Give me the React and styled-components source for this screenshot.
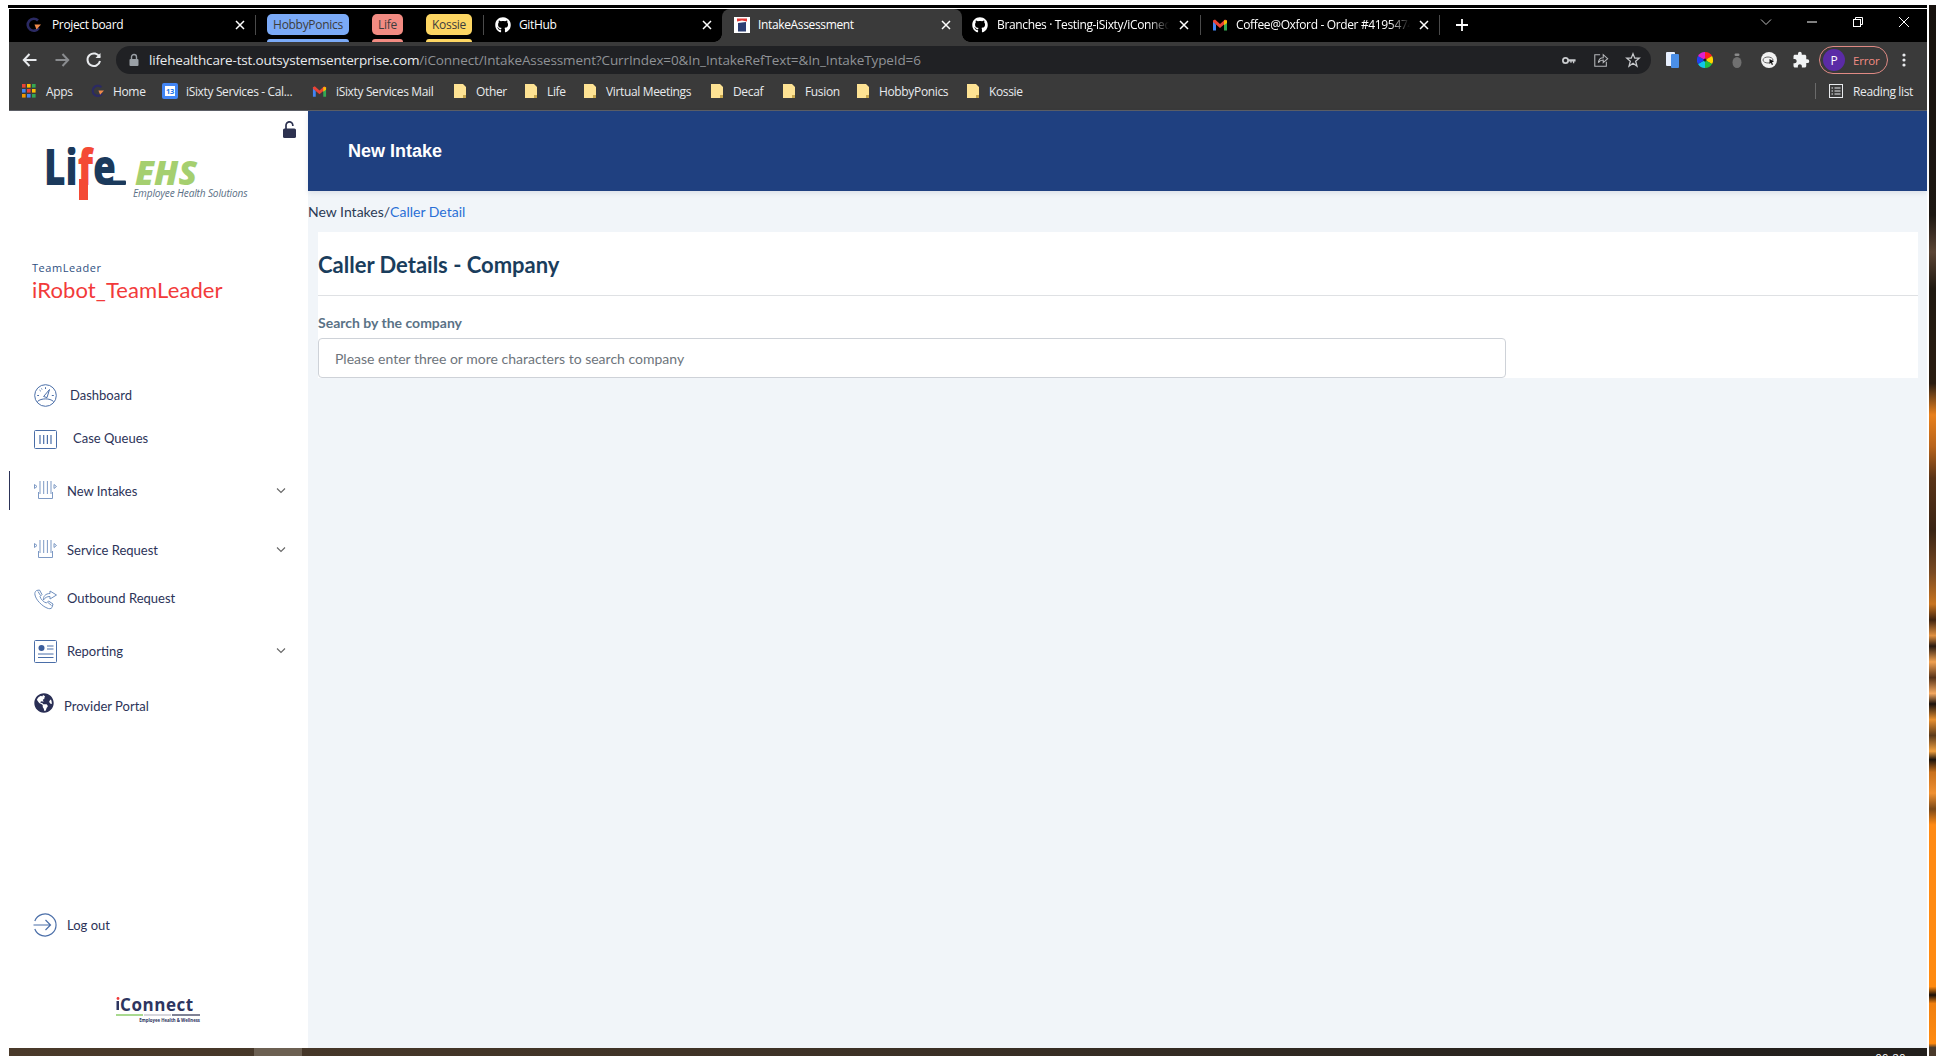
import React from "react";
import styled, { createGlobalStyle } from "styled-components";
import { FaGithub, FaGlobeAmericas } from "react-icons/fa";
import { MdExtension } from "react-icons/md";

const Global = createGlobalStyle`
  html, body { margin: 0; padding: 0; background: #fff; }
  * { box-sizing: border-box; }
  #root { width: 1936px; height: 1056px; overflow: hidden; }
`;

const CHROME_FONT = `"Open Sans", "Noto Sans", sans-serif`;
const APP_FONT = `Lato, "Open Sans", sans-serif`;

const Screen = styled.div`
  display: flex;
  width: 1936px;
  height: 1056px;
  padding-left: 9px;
  gap: 2px;
  background: #fff;
`;
const Wallpaper = styled.div`
  width: 7px;
  margin-top: 5px;
  background: linear-gradient(180deg,
    #17120e 0%, #1d1712 20%, #5a4434 23.5%, #1f1810 27%, #2a1c10 36%, #6b4018 37%, #e8801c 39%, #b8641c 42%, #5a3418 45%,
    #3a2414 50%, #7a4a22 54%, #c87420 57%, #40240f 58.5%, #e09040 60%, #2a1a10 61%, #f0a050 62.5%, #57331a 64%,
    #f4a860 65.5%, #1c120c 66.5%, #e89030 68%, #5c3a1a 69.5%, #f0a040 71%, #1d130a 71.8%, #c8701c 73%, #f09030 75%, #7a4818 76.5%,
    #ff8a14 78%, #ff8a10 93.4%, #1a0f08 94.2%, #f08010 95%, #ff8a10 98.8%, #4a3a2a 99.2%, #4a3a2a 100%);
`;
const Window = styled.div`
  width: 1918px;
  height: 1056px;
  display: flex;
  flex-direction: column;
`;
const TopRule = styled.div`
  height: 9px;
  flex: none;
  margin-left: -1px;
  border-top: 5px solid #fff;
  border-bottom: 1px solid #fff;
  background: #000;
`;

/* ---------- tab strip ---------- */
const TabStrip = styled.div`
  height: 33px;
  flex: none;
  display: flex;
  align-items: stretch;
  background: #000;
  color: #fff;
  font: 400 12px ${CHROME_FONT};
  letter-spacing: -0.35px;
`;
const Tab = styled.div`
  position: relative;
  width: ${(p) => p.$w}px;
  flex: none;
  display: flex;
  align-items: center;
  gap: ${(p) => p.$gap ?? 8}px;
  padding: 0 ${(p) => p.$pr ?? 10}px 2px ${(p) => p.$pl}px;
  border-radius: 8px 8px 0 0;
  background: ${(p) => (p.$active ? "#3a3a3a" : "transparent")};
  ${(p) =>
    p.$active &&
    `
    &::before, &::after {
      content: ""; position: absolute; bottom: 0; width: 8px; height: 8px;
    }
    &::before { left: -8px; background: radial-gradient(circle at 0 0, #000 7.5px, #3a3a3a 8px); }
    &::after { right: -8px; background: radial-gradient(circle at 100% 0, #000 7.5px, #3a3a3a 8px); }
  `}
`;
const TabTitle = styled.span`
  flex: 1;
  min-width: 0;
  white-space: nowrap;
  overflow: hidden;
  ${(p) =>
    p.$fade &&
    `-webkit-mask-image: linear-gradient(90deg, #000 88%, transparent 100%);
     mask-image: linear-gradient(90deg, #000 88%, transparent 100%);`}
`;
const TabSep = styled.div`
  width: 1px;
  height: 20px;
  flex: none;
  align-self: center;
  margin-top: -2px;
  background: #4a4a4a;
`;
const ChipGroup = styled.div`
  display: flex;
  flex-direction: column;
  flex: none;
  width: ${(p) => p.$w}px;
  margin-left: ${(p) => p.$ml}px;
  padding-top: 5px;
  gap: 4px;
`;
const Chip = styled.div`
  height: 21px;
  display: flex;
  align-items: center;
  justify-content: center;
  border-radius: 5px;
  background: ${(p) => p.$c};
  color: #3c3c3c;
  font-size: 12px;
  letter-spacing: -0.3px;
`;
const ChipTail = styled.div`
  height: 3px;
  border-radius: 3px 3px 0 0;
  background: ${(p) => p.$c};
`;
const NewTab = styled.div`
  width: 22px;
  margin-left: 11px;
  padding-bottom: 2px;
  display: flex;
  align-items: center;
  justify-content: center;
  flex: none;
`;
const WinControls = styled.div`
  margin-left: auto;
  display: flex;
  align-items: flex-start;
`;
const WinBtn = styled.div`
  width: 46px;
  height: 26px;
  display: flex;
  align-items: center;
  justify-content: center;
`;

/* ---------- toolbar ---------- */
const Toolbar = styled.div`
  height: 32px;
  flex: none;
  display: flex;
  align-items: flex-end;
  padding-left: 5px;
  background: #3a3a3a;
`;
const ToolBtn = styled.div`
  width: 32px;
  height: 28px;
  flex: none;
  display: flex;
  align-items: center;
  justify-content: center;
`;
const Omnibox = styled.div`
  width: 1535px;
  height: 28px;
  flex: none;
  margin: 0 6px;
  display: flex;
  align-items: center;
  padding: 0 2px 0 13px;
  border-radius: 14px;
  background: #202124;
  font: 400 13.5px ${CHROME_FONT};
  letter-spacing: -0.17px;
  white-space: nowrap;
`;
const UrlHost = styled.span`
  color: #e8eaed;
  margin-left: 10px;
`;
const UrlPath = styled.span`
  color: #8f9296;
  letter-spacing: -0.11px;
`;
const OmniActions = styled.div`
  margin-left: auto;
  display: flex;
`;
const ProfilePill = styled.div`
  width: 69px;
  height: 28px;
  flex: none;
  margin-left: 2px;
  display: flex;
  align-items: center;
  gap: 8px;
  padding-left: 3px;
  border: 1px solid #e08a84;
  border-radius: 14px;
  color: #f28b82;
  font: 400 11.5px ${CHROME_FONT};
  letter-spacing: -0.2px;
`;
const Avatar = styled.div`
  width: 22px;
  height: 22px;
  flex: none;
  border-radius: 50%;
  background: #5b2ba6;
  color: #fff;
  display: flex;
  align-items: center;
  justify-content: center;
  font-size: 12px;
`;

/* ---------- bookmarks ---------- */
const Bookmarks = styled.div`
  height: 37px;
  flex: none;
  display: flex;
  align-items: center;
  padding: 0 0 2px 13px;
  background: #3a3a3a;
  border-bottom: 1px solid #5c5f66;
  color: #e8eaed;
  font: 400 12px ${CHROME_FONT};
  letter-spacing: -0.35px;
  white-space: nowrap;
`;
const Bookmark = styled.div`
  width: ${(p) => p.$w}px;
  flex: none;
  display: flex;
  align-items: center;
  gap: ${(p) => p.$gap ?? 10}px;
`;
const HomeIcon = styled.span`
  display: flex;
  transform: scale(0.85);
`;
const ReadingList = styled.div`
  margin-left: auto;
  display: flex;
  align-items: center;
  gap: 10px;
  padding-right: 14px;
`;
const BarSep = styled.div`
  width: 1px;
  height: 16px;
  margin-right: 3px;
  background: #6a6a6a;
`;

/* ---------- app ---------- */
const AppArea = styled.div`
  flex: 1;
  min-height: 0;
  display: flex;
`;
const Sidebar = styled.aside`
  width: 299px;
  flex: none;
  display: flex;
  flex-direction: column;
  background: #fff;
  font: 400 13px ${APP_FONT};
  color: #2c3358;
`;
const LockRow = styled.div`
  height: 28px;
  display: flex;
  justify-content: flex-end;
  padding: 10px 12px 0 0;
`;
const LogoWrap = styled.div`
  margin: 8px 0 0 35px;
  height: 56px;
`;
const Profile = styled.div`
  margin: 58px 0 0 23px;
  height: 116px;
`;
const Role = styled.div`
  font: 400 11px/14px "Open Sans", sans-serif;
  letter-spacing: 0.55px;
  color: #2f4f7f;
`;
const UserName = styled.div`
  font: 400 22px/26px ${APP_FONT};
  color: #f23a3a;
  margin-top: 2px;
  letter-spacing: 0.1px;
`;
const Nav = styled.nav`
  display: flex;
  flex-direction: column;
  flex: 1;
`;
const NavItem = styled.div`
  position: relative;
  height: ${(p) => p.$h}px;
  margin-top: ${(p) => p.$mt ?? 0}px;
  display: flex;
  align-items: center;
  gap: ${(p) => p.$gap ?? 10}px;
  padding: 0 21px 0 25px;
  flex: none;
  ${(p) => p.$active && `border-left: 1px solid #2c3358; padding-left: 24px;`}
`;
const NavIcon = styled.span`
  display: flex;
  flex: none;
  margin-top: ${(p) => p.$dy ?? 0}px;
  color: #4a6ea8;
`;
const NavText = styled.span`
  margin-top: ${(p) => p.$dy ?? 0}px;
`;
const Chevron = styled.span`
  margin-left: auto;
  display: flex;
  color: #666;
`;
const Logout = styled(NavItem)`
  margin-top: auto;
  margin-bottom: 52px;
  padding-left: 24px;
`;
const FooterLogo = styled.div`
  height: 24px;
  margin: 0 0 27px 107px;
`;
const Main = styled.main`
  flex: 1;
  min-width: 0;
  display: flex;
  flex-direction: column;
  background: #f1f5f9;
`;
const PageHeader = styled.header`
  height: 80px;
  flex: none;
  display: flex;
  align-items: center;
  padding-left: 40px;
  background: #1f4080;
  color: #fff;
  font: 700 18px "Liberation Sans", Arial, sans-serif;
  box-shadow: 0 2px 5px rgba(30, 50, 90, 0.1);
`;
const Crumbs = styled.div`
  height: 41px;
  flex: none;
  display: flex;
  align-items: center;
  font: 400 14px ${APP_FONT};
  color: #2b3a55;
`;
const CrumbLink = styled.span`
  color: #2a6fd6;
`;
const Card = styled.section`
  margin: 0 9px 0 10px;
  background: #fff;
  height: 146px;
  flex: none;
`;
const CardTitle = styled.h1`
  margin: 0;
  height: 64px;
  display: flex;
  align-items: center;
  padding-top: 2px;
  border-bottom: 1px solid #dfe1e4;
  font: 700 22px ${APP_FONT};
  color: #1a3d5c;
`;
const FieldLabel = styled.label`
  display: block;
  margin-top: 18px;
  font: 700 14px/18px ${APP_FONT};
  color: #5a7286;
`;
const SearchBox = styled.input`
  display: block;
  width: 1188px;
  height: 40px;
  margin-top: 6px;
  padding: 0 16px;
  border: 1px solid #ced2d8;
  border-radius: 4px;
  background: #fff;
  font: 400 14px ${APP_FONT};
  color: #333;
  outline: none;
  &::placeholder { color: #6e757c; opacity: 1; }
`;
const StatusBar = styled.div`
  height: 8px;
  flex: none;
  display: flex;
  justify-content: space-between;
  overflow: hidden;
  padding-left: 245px;
  background: linear-gradient(90deg, #4a3a2a 0%, #3c3126 45%, #23201d 90%, #221f1c 100%);
`;
const Thumb = styled.div`
  width: 48px;
  background: #6c6052;
`;
const Clock = styled.div`
  font: 400 11px/12px "Liberation Sans", sans-serif;
  letter-spacing: 0.6px;
  color: #fff;
  padding: 4px 21px 0 0;
`;

/* ---------- icons ---------- */
const GFav = () => (
  <svg width="16" height="16" viewBox="0 0 16 16">
    <path d="M12 3.5A6 6 0 1 0 12.8 11" fill="none" stroke="#2b2a63" strokeWidth="2.6" />
    <path d="M8.5 7.5H15L10.5 12.5Z" fill="#f08a4b" />
  </svg>
);
const AppFav = () => (
  <svg width="16" height="16" viewBox="0 0 16 16">
    <rect width="16" height="16" fill="#fff" />
    <path d="M3 1.5H13V4.5L8 3.5L3 4.5Z" fill="#e53935" />
    <path d="M4 6L12 5V14.5H4Z" fill="#2c3e73" />
  </svg>
);
const GMail = ({ s = 16 }) => (
  <svg width={s} height={s} viewBox="0 0 16 16">
    <path d="M1 3.5V13.5H4V7.5Z" fill="#4285f4" />
    <path d="M15 3.5V13.5H12V7.5Z" fill="#34a853" />
    <path d="M1 3.5L3 2.5L8 7L13 2.5L15 3.5V5L12 7.5L8 11L4 7.5L1 5Z" fill="#ea4335" />
    <path d="M12 3.3L15 3.5V6L12 8.3Z" fill="#fbbc04" />
  </svg>
);
const CloseX = () => (
  <svg width="12" height="12" viewBox="0 0 12 12">
    <path d="M2 2L10 10M10 2L2 10" stroke="#fff" strokeWidth="1.5" />
  </svg>
);
const Folder = () => (
  <svg width="12" height="14" viewBox="0 0 12 14">
    <path d="M0 0H9L12 3V14H0Z" fill="#fde293" />
    <path d="M9 11H12V14H9Z" fill="#c8a84f" />
  </svg>
);
const AppsGrid = () => {
  const c = ["#ea4335", "#fbbc04", "#34a853", "#4285f4", "#ea4335", "#fbbc04", "#f29900", "#4285f4", "#34a853"];
  return (
    <svg width="14" height="14" viewBox="0 0 14 14">
      {c.map((f, i) => (
        <rect key={i} x={(i % 3) * 5} y={Math.floor(i / 3) * 5} width="3.6" height="3.6" fill={f} />
      ))}
    </svg>
  );
};
const CalIcon = () => (
  <svg width="16" height="16" viewBox="0 0 16 16">
    <rect width="16" height="16" rx="2" fill="#4285f4" />
    <rect x="3" y="3" width="10" height="10" fill="#fff" />
    <text x="8" y="11" fontSize="7.5" fontFamily="Open Sans" fontWeight="700" textAnchor="middle" fill="#1a73e8">13</text>
  </svg>
);
const Lock = () => (
  <svg width="10" height="14" viewBox="0 0 10 14">
    <path d="M2.5 6V4a2.5 2.5 0 0 1 5 0v2" fill="none" stroke="#9aa0a6" strokeWidth="1.4" />
    <rect x="0.5" y="6" width="9" height="7" rx="1" fill="#9aa0a6" />
  </svg>
);
const Stroke = ({ w = 18, h = 18, vb = "0 0 18 18", c = "#e8eaed", sw = 1.6, children }) => (
  <svg width={w} height={h} viewBox={vb} fill="none" stroke={c} strokeWidth={sw}>
    {children}
  </svg>
);
const Gauge = () => (
  <Stroke w={23} h={23} vb="0 0 23 23" c="#4a6ea8" sw={1}>
    <circle cx="11.5" cy="11.5" r="10.8" />
    <path d="M3.5 17.5C7 14 16 14 19.5 17.5" />
    <path d="M9.6 12.5L15.5 5.5L13 13.6Z" />
    <path d="M11.5 3.2V5M5.5 6L6.8 7.2M3.2 11.5H5M17.8 11.5H19.8M7.5 4.5L8 5.5" />
  </Stroke>
);
const Queue = () => (
  <Stroke w={23} h={19} vb="0 0 23 19" c="#4a6ea8" sw={1}>
    <rect x="0.5" y="0.5" width="22" height="18" rx="1" />
    <path d="M6 5V14M9.7 5V14M13.4 5V14M17 5V14" strokeWidth="1.2" />
  </Stroke>
);
const Intake = () => (
  <svg width="23" height="19" viewBox="0 0 23 19" fill="none" stroke="#7d99c4" strokeWidth="1">
    <path d="M6 0V13M9.7 0V13M13.4 0V13M17 0V13" />
    <path d="M4.5 11V17.5H18.5V11" />
    <path d="M0.5 3.5L3 5.5L0.5 7.5ZM20 3.5L22.5 5.5L20 7.5Z" />
  </svg>
);
const Outbound = () => (
  <Stroke w={23} h={21} vb="0 0 23 21" c="#6f8fbe" sw={1}>
    <path d="M2.5 1.5L5.5 1L8 5.5L6 7.5C6.5 10 10 13.5 12.5 14L14.5 12L19 15L18 18.5C17 20 15 20 13 19C8 17 2 11 1 6C0.5 4 1.2 2.5 2.5 1.5Z" />
    <path d="M4 2.5L6.5 6.5M14 13.5L17.5 16.5" />
    <path d="M9.5 11C9 7.5 11.5 4.5 16 4.5V2L22.5 6L16 10V7.5C13 7.5 11 8.5 9.5 11Z" />
  </Stroke>
);
const ReportIcon = () => (
  <svg width="23" height="23" viewBox="0 0 23 23">
    <rect x="0.5" y="0.5" width="22" height="22" rx="1" fill="none" stroke="#4a6ea8" />
    <circle cx="7.5" cy="8" r="3" fill="#3c5e9c" />
    <path d="M13 6H19.5M13 9H19.5M4 14H19.5M4 17.5H19.5" stroke="#4a6ea8" strokeWidth="1" />
  </svg>
);
const LogoutIcon = () => (
  <Stroke w={24} h={24} vb="0 0 24 24" c="#4a6ea8" sw={1.2}>
    <path d="M1.8 8A11 11 0 1 1 1.8 16" />
    <path d="M0.5 12H17M12.5 7L17.5 12L12.5 17" />
  </Stroke>
);
const ChevronDown = () => (
  <svg width="12" height="8" viewBox="0 0 12 8" fill="none" stroke="#666" strokeWidth="1.1">
    <path d="M2 1.5L6 5.5L10 1.5" />
  </svg>
);
const LockOpen = () => (
  <svg width="13" height="17" viewBox="0 0 13 17">
    <path d="M3 8V4.2a3.4 3.4 0 0 1 6.8 0V5" fill="none" stroke="#2d3250" strokeWidth="1.7" />
    <rect x="0" y="7.5" width="13" height="9.5" rx="1.6" fill="#2d3250" />
  </svg>
);
const LifeLogo = () => (
  <svg width="206" height="56" viewBox="0 0 206 56">
    <rect x="35" y="32" width="9" height="21" fill="#f44a35" />
    <text x="0" y="38" textLength="72" lengthAdjust="spacingAndGlyphs" fontFamily="Open Sans" fontWeight="800" fontSize="49" fill="#1b3a5c">
      Li<tspan fill="#f44a35">f</tspan>e
    </text>
    <rect x="62" y="33.5" width="20" height="4.5" rx="1" fill="#1b3a5c" />
    <text x="91" y="38" fontFamily="Open Sans" fontWeight="800" fontStyle="italic" fontSize="34" fill="#a5cf6f">EHS</text>
    <text x="89" y="50" fontFamily="Open Sans" fontStyle="italic" fontSize="10.1" fill="#5a6f85" letterSpacing="-0.15">Employee Health Solutions</text>
  </svg>
);
const IConnectLogo = () => (
  <svg width="86" height="26" viewBox="0 0 86 26">
    <circle cx="2" cy="1.5" r="1.4" fill="#ef3b3b" />
    <rect x="0.5" y="4" width="2.5" height="9" fill="#2d3560" />
    <text x="4" y="14" fontFamily="Open Sans" fontWeight="700" fontSize="17" fill="#2d3560" letterSpacing="0.55">Connect</text>
    <rect x="0" y="17" width="27" height="2" fill="#a9d98f" />
    <rect x="28" y="17" width="27" height="2" fill="#d6d6dc" />
    <rect x="56" y="17" width="28" height="2" fill="#7f8296" />
    <text x="84" y="24.5" textAnchor="end" fontFamily="Open Sans" fontWeight="700" fontSize="4.3" fill="#2d3560">Employee Health &amp; Wellness</text>
  </svg>
);

const tabs = {
  hobby: "#7baaf7",
  life: "#f28b82",
  kossie: "#fdd663",
};

export default function App() {
  return (
    <Screen>
      <Global />
      <Window>
        <TopRule />
        <TabStrip>
          <Tab $w={246} $pl={17} $gap={10} $pr={9}>
            <GFav />
            <TabTitle>Project board</TabTitle>
            <CloseX />
          </Tab>
          <TabSep />
          <ChipGroup $w={82} $ml={11}>
            <Chip $c={tabs.hobby}>HobbyPonics</Chip>
            <ChipTail $c={tabs.hobby} />
          </ChipGroup>
          <ChipGroup $w={31} $ml={23}>
            <Chip $c={tabs.life}>Life</Chip>
            <ChipTail $c={tabs.life} />
          </ChipGroup>
          <ChipGroup $w={46} $ml={23}>
            <Chip $c={tabs.kossie}>Kossie</Chip>
            <ChipTail $c={tabs.kossie} />
          </ChipGroup>
          <ChipGroup $w={0} $ml={11} />
          <TabSep />
          <Tab $w={238} $pl={11} $pr={9}>
            <FaGithub size={16} color="#fff" />
            <TabTitle>GitHub</TabTitle>
            <CloseX />
          </Tab>
          <Tab $w={240} $pl={12} $active>
            <AppFav />
            <TabTitle>IntakeAssessment</TabTitle>
            <CloseX />
          </Tab>
          <Tab $w={238} $pl={10} $gap={9}>
            <FaGithub size={16} color="#fff" />
            <TabTitle $fade>Branches · Testing-iSixty/iConnect</TabTitle>
            <CloseX />
          </Tab>
          <TabSep />
          <Tab $w={238} $pl={11} $pr={9}>
            <GMail />
            <TabTitle $fade>Coffee@Oxford - Order #41954747</TabTitle>
            <CloseX />
          </Tab>
          <TabSep />
          <NewTab>
            <svg width="14" height="14" viewBox="0 0 14 14">
              <path d="M7 1V13M1 7H13" stroke="#fff" strokeWidth="1.8" />
            </svg>
          </NewTab>
          <WinControls>
            <WinBtn>
              <svg width="12" height="8" viewBox="0 0 12 8" fill="none" stroke="#bdbdbd">
                <path d="M1 1.5L6 6.5L11 1.5" />
              </svg>
            </WinBtn>
            <WinBtn>
              <svg width="12" height="2" viewBox="0 0 12 2">
                <path d="M1 1H11" stroke="#fff" />
              </svg>
            </WinBtn>
            <WinBtn>
              <svg width="12" height="12" viewBox="0 0 12 12" fill="none" stroke="#fff">
                <rect x="1.5" y="3.5" width="7" height="7" />
                <path d="M3.5 3.5V1.5H10.5V8.5H8.5" />
              </svg>
            </WinBtn>
            <WinBtn>
              <svg width="12" height="12" viewBox="0 0 12 12" stroke="#fff">
                <path d="M1 1L11 11M11 1L1 11" />
              </svg>
            </WinBtn>
          </WinControls>
        </TabStrip>

        <Toolbar>
          <ToolBtn>
            <Stroke sw={2}>
              <path d="M15.5 9H3M8.5 3L2.8 9L8.5 15" />
            </Stroke>
          </ToolBtn>
          <ToolBtn>
            <Stroke c="#8a8c8f" sw={2}>
              <path d="M2.5 9H15M9.5 3L15.2 9L9.5 15" />
            </Stroke>
          </ToolBtn>
          <ToolBtn>
            <Stroke sw={2}>
              <path d="M14.6 6.2A6.3 6.3 0 1 0 15 10" />
              <path d="M15.5 2V7H10.5" fill="#e8eaed" stroke="none" />
            </Stroke>
          </ToolBtn>
          <Omnibox>
            <Lock />
            <UrlHost>lifehealthcare-tst.outsystemsenterprise.com</UrlHost>
            <UrlPath>/iConnect/IntakeAssessment?CurrIndex=0&amp;In_IntakeRefText=&amp;In_IntakeTypeId=6</UrlPath>
            <OmniActions>
              <ToolBtn>
                <svg width="14" height="9" viewBox="0 0 16 10">
                  <circle cx="4" cy="5" r="3" fill="none" stroke="#c8cacd" strokeWidth="2" />
                  <path d="M7 3.5H15.5V6H14V8H12.5V6H11V7.5H9.5V6H7Z" fill="#c8cacd" />
                </svg>
              </ToolBtn>
              <ToolBtn>
                <Stroke w={16} h={16} c="#b5b7ba" sw={1.2}>
                  <path d="M8 3H2V16H15V11" />
                  <path d="M6 12C6.5 8.5 8.5 6.5 11.5 6.5V3L16.5 7.5L11.5 12V9C9 9 7.5 10 6 12Z" />
                </Stroke>
              </ToolBtn>
              <ToolBtn>
                <Stroke w={16} h={16} c="#c8cacd" sw={1.4}>
                  <path d="M9 2L11 7H16L12 10.3L13.5 16L9 12.6L4.5 16L6 10.3L2 7H7Z" />
                </Stroke>
              </ToolBtn>
            </OmniActions>
          </Omnibox>
          <ToolBtn>
            <svg width="14" height="16" viewBox="0 0 14 16">
              <rect x="0" y="0" width="9" height="14" rx="1" fill="#e8f0fe" />
              <rect x="5" y="2" width="8" height="14" rx="1" fill="#4a8fe8" />
            </svg>
          </ToolBtn>
          <ToolBtn>
            <svg width="16" height="16" viewBox="0 0 16 16">
              <path d="M8 8L8 0A8 8 0 0 1 15 4Z" fill="#ff2020" />
              <path d="M8 8L15 4A8 8 0 0 1 15 12Z" fill="#ffd400" />
              <path d="M8 8L15 12A8 8 0 0 1 8 16Z" fill="#20c040" />
              <path d="M8 8L8 16A8 8 0 0 1 1 12Z" fill="#10c8e8" />
              <path d="M8 8L1 12A8 8 0 0 1 1 4Z" fill="#2040f0" />
              <path d="M8 8L1 4A8 8 0 0 1 8 0Z" fill="#e020d0" />
              <circle cx="8" cy="8" r="1.6" fill="#222" />
            </svg>
          </ToolBtn>
          <ToolBtn>
            <svg width="10" height="15" viewBox="0 0 10 15">
              <ellipse cx="5" cy="9.5" rx="4.5" ry="5.5" fill="#707070" />
              <rect x="2.5" y="0.5" width="5" height="2.5" rx="1.2" fill="#8a8a8a" />
            </svg>
          </ToolBtn>
          <ToolBtn>
            <svg width="16" height="16" viewBox="0 0 16 16">
              <circle cx="8" cy="8" r="8" fill="#f1f1f1" />
              <ellipse cx="7" cy="8" rx="5" ry="3" fill="none" stroke="#666" />
              <path d="M8.5 7L13 9.5L11 10.3L12 12.5L10.8 13L10 10.8L8.5 12Z" fill="#111" />
            </svg>
          </ToolBtn>
          <ToolBtn>
            <MdExtension size={18} color="#f1f3f4" />
          </ToolBtn>
          <ProfilePill>
            <Avatar>P</Avatar>
            Error
          </ProfilePill>
          <ToolBtn>
            <svg width="4" height="14" viewBox="0 0 4 14" fill="#e8eaed">
              <circle cx="2" cy="2" r="1.6" />
              <circle cx="2" cy="7" r="1.6" />
              <circle cx="2" cy="12" r="1.6" />
            </svg>
          </ToolBtn>
        </Toolbar>

        <Bookmarks>
          <Bookmark $w={68}><AppsGrid />Apps</Bookmark>
          <Bookmark $w={72} $gap={7}><HomeIcon><GFav /></HomeIcon>Home</Bookmark>
          <Bookmark $w={150} $gap={8}><CalIcon />iSixty Services - Cal...</Bookmark>
          <Bookmark $w={142} $gap={9}><GMail s={15} />iSixty Services Mail</Bookmark>
          <Bookmark $w={71}><Folder />Other</Bookmark>
          <Bookmark $w={59}><Folder />Life</Bookmark>
          <Bookmark $w={127}><Folder />Virtual Meetings</Bookmark>
          <Bookmark $w={72}><Folder />Decaf</Bookmark>
          <Bookmark $w={74}><Folder />Fusion</Bookmark>
          <Bookmark $w={110}><Folder />HobbyPonics</Bookmark>
          <Bookmark $w={60}><Folder />Kossie</Bookmark>
          <ReadingList>
            <BarSep />
            <svg width="14" height="14" viewBox="0 0 14 14" fill="none" stroke="#e8eaed">
              <rect x="0.5" y="0.5" width="13" height="13" />
              <path d="M2.5 4H4M5.5 4H11.5M2.5 7H4M5.5 7H11.5M2.5 10H4M5.5 10H11.5" />
            </svg>
            Reading list
          </ReadingList>
        </Bookmarks>

        <AppArea>
          <Sidebar>
            <LockRow><LockOpen /></LockRow>
            <LogoWrap><LifeLogo /></LogoWrap>
            <Profile>
              <Role>TeamLeader</Role>
              <UserName>iRobot_TeamLeader</UserName>
            </Profile>
            <Nav>
              <NavItem $h={36} $gap={13}>
                <NavIcon><Gauge /></NavIcon>
                <NavText>Dashboard</NavText>
              </NavItem>
              <NavItem $h={52} $gap={16}>
                <NavIcon><Queue /></NavIcon>
                <NavText $dy={-3}>Case Queues</NavText>
              </NavItem>
              <NavItem $h={39} $mt={6} $active>
                <NavIcon><Intake /></NavIcon>
                <NavText>New Intakes</NavText>
                <Chevron><ChevronDown /></Chevron>
              </NavItem>
              <NavItem $h={39} $mt={20}>
                <NavIcon><Intake /></NavIcon>
                <NavText>Service Request</NavText>
                <Chevron><ChevronDown /></Chevron>
              </NavItem>
              <NavItem $h={40} $mt={10}>
                <NavIcon><Outbound /></NavIcon>
                <NavText $dy={-2}>Outbound Request</NavText>
              </NavItem>
              <NavItem $h={40} $mt={12}>
                <NavIcon><ReportIcon /></NavIcon>
                <NavText>Reporting</NavText>
                <Chevron><ChevronDown /></Chevron>
              </NavItem>
              <NavItem $h={38} $mt={16}>
                <NavIcon $dy={-7}><FaGlobeAmericas size={20} color="#2a2f55" /></NavIcon>
                <NavText>Provider Portal</NavText>
              </NavItem>
              <Logout $h={40}>
                <NavIcon><LogoutIcon /></NavIcon>
                <NavText>Log out</NavText>
              </Logout>
            </Nav>
            <FooterLogo><IConnectLogo /></FooterLogo>
          </Sidebar>
          <Main>
            <PageHeader>New Intake</PageHeader>
            <Crumbs>
              New Intakes/<CrumbLink>Caller Detail</CrumbLink>
            </Crumbs>
            <Card>
              <CardTitle>Caller Details - Company</CardTitle>
              <FieldLabel htmlFor="company">Search by the company</FieldLabel>
              <SearchBox id="company" placeholder="Please enter three or more characters to search company" />
            </Card>
          </Main>
        </AppArea>
        <StatusBar>
          <Thumb />
          <Clock>09:30</Clock>
        </StatusBar>
      </Window>
      <Wallpaper />
    </Screen>
  );
}
